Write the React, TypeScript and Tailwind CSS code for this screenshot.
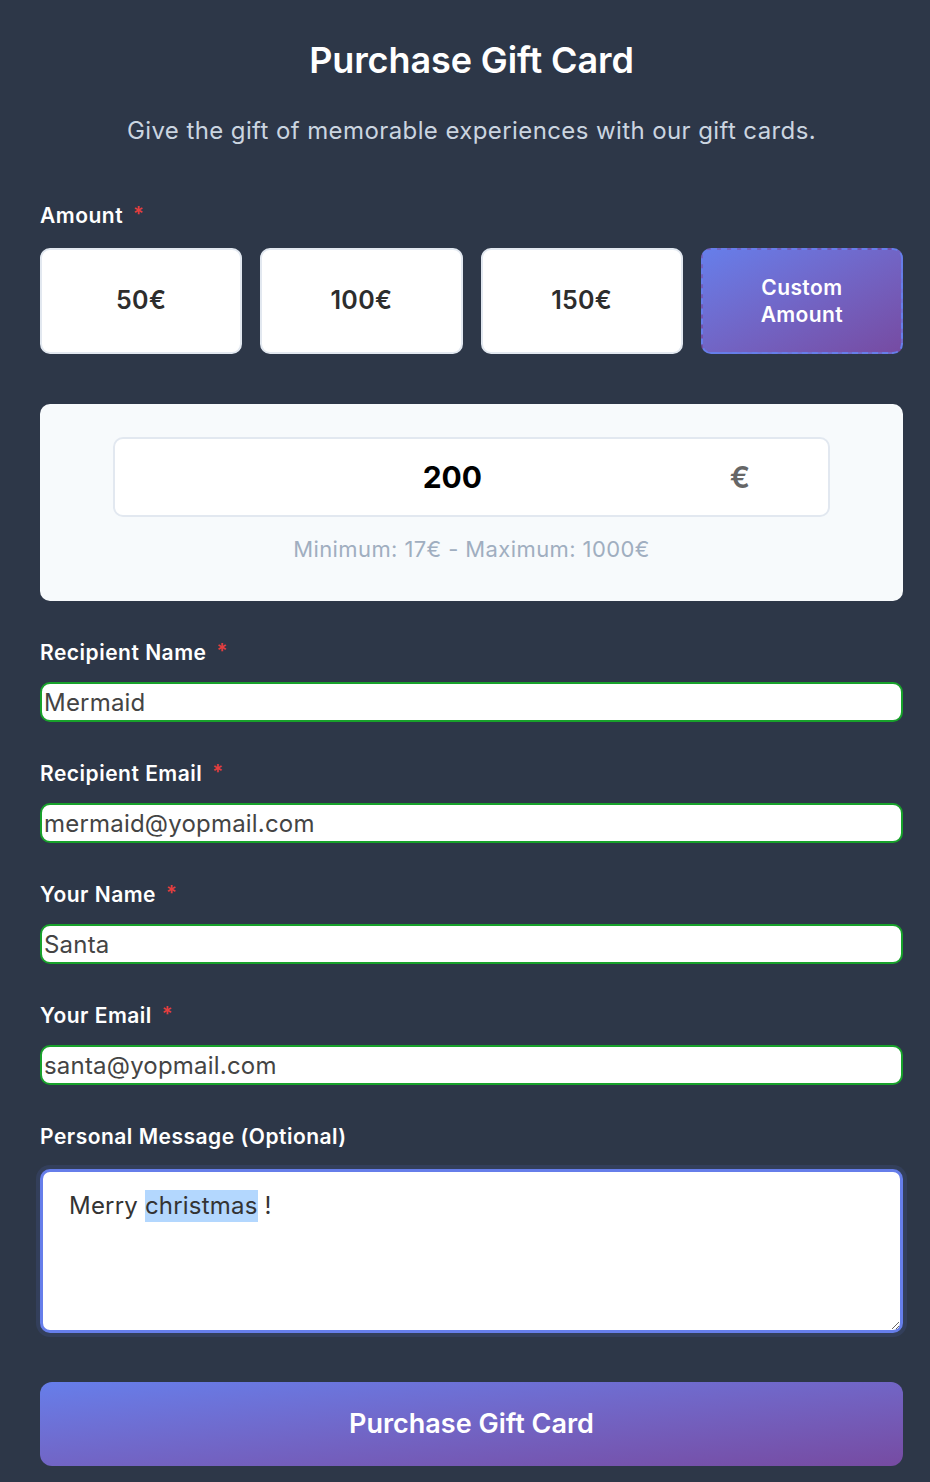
import React, { useEffect, useRef, useState } from "react";

const presets = ["50€", "100€", "150€"];

const fields = [
  { label: "Recipient Name", value: "Mermaid", type: "text" },
  { label: "Recipient Email", value: "mermaid@yopmail.com", type: "email" },
  { label: "Your Name", value: "Santa", type: "text" },
  { label: "Your Email", value: "santa@yopmail.com", type: "email" },
];

const Label = ({ text, required }: { text: string; required?: boolean }) => (
  <div className="flex items-start text-[21px] font-semibold leading-[28px] tracking-[0.5px] text-white">
    {text}
    {required && <span className="ml-[10px] mt-[1px] text-[20px] leading-[22px] text-[#e53e3e]">*</span>}
  </div>
);

const App: React.FC = () => {
  const [amount, setAmount] = useState("200");
  const msgRef = useRef<HTMLTextAreaElement>(null);

  // highlight the word like in the reference
  useEffect(() => {
    const el = msgRef.current;
    if (el) {
      el.focus();
      el.setSelectionRange(6, 15);
    }
  }, []);

  return (
    <div className="min-h-screen w-full bg-[#2d3748] pb-4 pl-10 pr-[27px] pt-[36px] font-['Inter',sans-serif]">
      {/* Header */}
      <h1 className="text-center text-[36px] font-semibold leading-[48px] tracking-[-0.1px] text-white">
        Purchase Gift Card
      </h1>
      <p className="mt-[31px] text-center text-[24px] leading-[32px] tracking-[0.4px] text-[#cbd5e0]">
        Give the gift of memorable experiences with our gift cards.
      </p>

      {/* Amount */}
      <div className="mt-[55px]">
        <Label text="Amount" required />
        <div className="mt-[18px] grid grid-cols-4 gap-[18px]">
          {presets.map((p) => (
            <button
              key={p}
              className="flex h-[106px] items-center justify-center rounded-[10px] border-2 border-[#e2e8f0] bg-white text-[25px] font-semibold tracking-[0.3px] text-[#2d2d2d]"
            >
              {p}
            </button>
          ))}
          <button className="flex h-[106px] items-center justify-center rounded-[10px] border-2 border-dashed border-[#667eea] bg-gradient-to-br from-[#667eea] to-[#764ba2] text-[21px] font-semibold leading-[27px] tracking-[0.4px] text-white">
            Custom
            <br />
            Amount
          </button>
        </div>
      </div>

      {/* Custom amount panel */}
      <div className="mt-[50px] flex flex-col items-center rounded-[10px] bg-[#f7fafc] px-[73px] pb-[38px] pt-[33px]">
        <div className="flex h-[80px] w-full items-center rounded-[10px] border-2 border-[#e2e8f0] bg-white">
          <input
            value={amount}
            onChange={(e) => setAmount(e.target.value)}
            className="w-full bg-transparent pl-[60px] text-center text-[30px] font-bold text-black outline-none"
          />
          <span className="mr-[78px] text-[30px] font-semibold text-[#666]">€</span>
        </div>
        <p className="mt-[18px] text-[22px] leading-[28px] tracking-[0.4px] text-[#a0aec0]">
          Minimum: 17€ - Maximum: 1000€
        </p>
      </div>

      {/* Details */}
      <div className="mt-[38px] flex flex-col gap-[38px]">
        {fields.map((f) => (
          <div key={f.label} className="flex flex-col gap-[15px]">
            <Label text={f.label} required />
            <input
              type={f.type}
              defaultValue={f.value}
              className="h-[40px] w-full rounded-[10px] border-2 border-[#18a12b] bg-white px-[2px] text-[24px] tracking-[0.2px] text-[#444] outline-none"
            />
          </div>
        ))}
      </div>

      {/* Message */}
      <div className="mt-[38px] flex flex-col gap-[18px]">
        <Label text="Personal Message (Optional)" />
        <textarea
          ref={msgRef}
          defaultValue="Merry christmas !"
          className="h-[164px] w-full rounded-[10px] border-[3px] border-[#667eea] bg-white px-[26px] py-[18px] text-[24px] leading-[32px] tracking-[0.2px] text-[#333] shadow-[0_0_0_4px_rgba(102,126,234,0.12)] outline-none selection:bg-[#b3d7fe] selection:text-[#333]"
        />
      </div>

      <button className="mt-[49px] flex h-[84px] w-full items-center justify-center rounded-[12px] bg-gradient-to-br from-[#667eea] to-[#764ba2] text-[27px] font-semibold text-white">
        Purchase Gift Card
      </button>
    </div>
  );
};

export default App;
